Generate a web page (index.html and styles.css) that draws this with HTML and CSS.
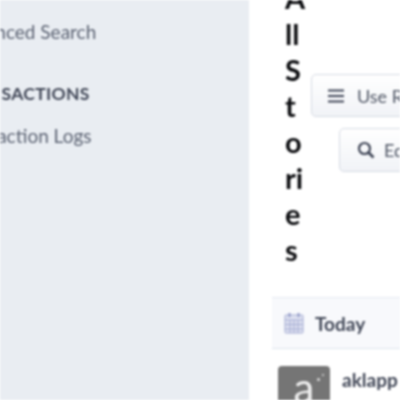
FILE: index.html
```html
<!DOCTYPE html>
<html lang="en">
<head>
  <meta charset="UTF-8" />
  <title>All Stories</title>
  <link rel="stylesheet" href="styles.css">
</head>
<body>
  <div class="page">
    <nav class="sidebar">
      <a class="side-link first">Advanced Search</a>
      <div class="side-title">TRANSACTIONS</div>
      <a class="side-link">Transaction Logs</a>
    </nav>

    <main class="content">
      <div class="header">
        <h1>All Stories</h1>
        <div class="actions">
          <button class="btn btn-use">
            <svg width="18" height="18" viewBox="0 0 18 18"><path d="M1 3.500h16M1 9h16M1 14.500h16" stroke="#3f4556" stroke-width="2.200" fill="none"/></svg>
            Use Results
          </button>
          <button class="btn btn-edit">
            <svg width="18" height="18" viewBox="0 0 18 18"><circle cx="7.500" cy="7.500" r="5.500" stroke="#3f4556" stroke-width="2.200" fill="none"/><path d="M11.500 11.500l5 5" stroke="#3f4556" stroke-width="2.600" fill="none"/></svg>
            Edit Query
          </button>
        </div>
      </div>

      <div class="day-bar">
        <svg width="20" height="22" viewBox="0 0 20 22"><rect x="1" y="3" width="18" height="18" rx="1" fill="#dfe2f1" stroke="#a4abd2"/><path d="M1 8h18M1 12.500h18M1 17h18M6 8v13M10 8v13M14 8v13" stroke="#a4abd2" fill="none"/><path d="M5.500 1v4M14.500 1v4" stroke="#8f97c6" stroke-width="2"/></svg>
        <span>Today</span>
      </div>

      <div class="story">
        <div class="avatar">a<i class="spark"></i><i class="spark small"></i></div>
        <span class="author">aklapp</span>
      </div>
    </main>
  </div>
</body>
</html>
```

FILE: styles.css
```css
html, body {
  margin: 0;
  height: 100%;
  overflow: hidden;
  background: #fff;
}
.page {
  display: flex;
  width: 400px;
  height: 400px;
  overflow: hidden;
  font-family: 'Lato', sans-serif;
  color: #464c5c;
  filter: blur(0.8px);
}
.sidebar {
  flex: 0 0 249px;
  background: #e9edf2;
  box-sizing: border-box;
  padding-top: 20px;
}
.side-link {
  display: block;
  margin-left: -47px;
  font-size: 19px;
  line-height: 24px;
  color: #5c6373;
  white-space: nowrap;
}
.side-title {
  margin: 38px 0 18px -47px;
  font-size: 17.500px;
  line-height: 24px;
  font-weight: 700;
  letter-spacing: 0.3px;
  color: #414757;
  white-space: nowrap;
}
.content {
  flex: 1;
  min-width: 0;
  padding-left: 23px;
}
.header {
  display: flex;
  gap: 6px;
  margin-left: 13px;
}
h1 {
  flex: 0 0 20px;
  width: 20px;
  margin: -20px 0 0;
  font-size: 29px;
  line-height: 36px;
  font-weight: 700;
  color: #0a0b0e;
  word-break: break-all;
}
.actions {
  display: flex;
  flex-direction: column;
  padding-top: 74px;
  gap: 11px;
}
.btn {
  display: flex;
  align-items: center;
  gap: 12px;
  height: 43px;
  box-sizing: border-box;
  border: 1px solid #d5dae3;
  border-radius: 5px;
  background: linear-gradient(#fff, #f1f3f7);
  font-family: inherit;
  font-size: 18px;
  color: #505766;
  white-space: nowrap;
  width: 140px;
  padding: 0 0 0 15px;
}
.btn-edit {
  margin-left: 28px;
  height: 44px;
  gap: 9px;
  padding-left: 17px;
}
.day-bar {
  display: flex;
  align-items: center;
  gap: 11px;
  margin-top: 29px;
  height: 52px;
  box-sizing: border-box;
  padding-left: 12px;
  background: #f8f9fc;
  border-top: 1px solid #e4e9f2;
  border-bottom: 1px solid #dde4ee;
  font-size: 19px;
  font-weight: 700;
  color: #414757;
}
.story {
  display: flex;
  align-items: flex-start;
  gap: 12px;
  margin: 17px 0 0 6px;
}
.avatar {
  position: relative;
  flex: 0 0 52px;
  height: 52px;
  border-radius: 4px;
  background: #757575;
  color: #eee;
  font-size: 42px;
  line-height: 42px;
  text-align: center;
}
.spark {
  position: absolute;
  top: 12px;
  left: 39px;
  width: 3px;
  height: 3px;
  background: #ddd;
  border-radius: 50%;
}
.spark.small {
  top: 8px;
  left: 44px;
  width: 2px;
  height: 2px;
}
.author {
  font-size: 19px;
  font-weight: 700;
  line-height: 28px;
  color: #414757;
}
```
